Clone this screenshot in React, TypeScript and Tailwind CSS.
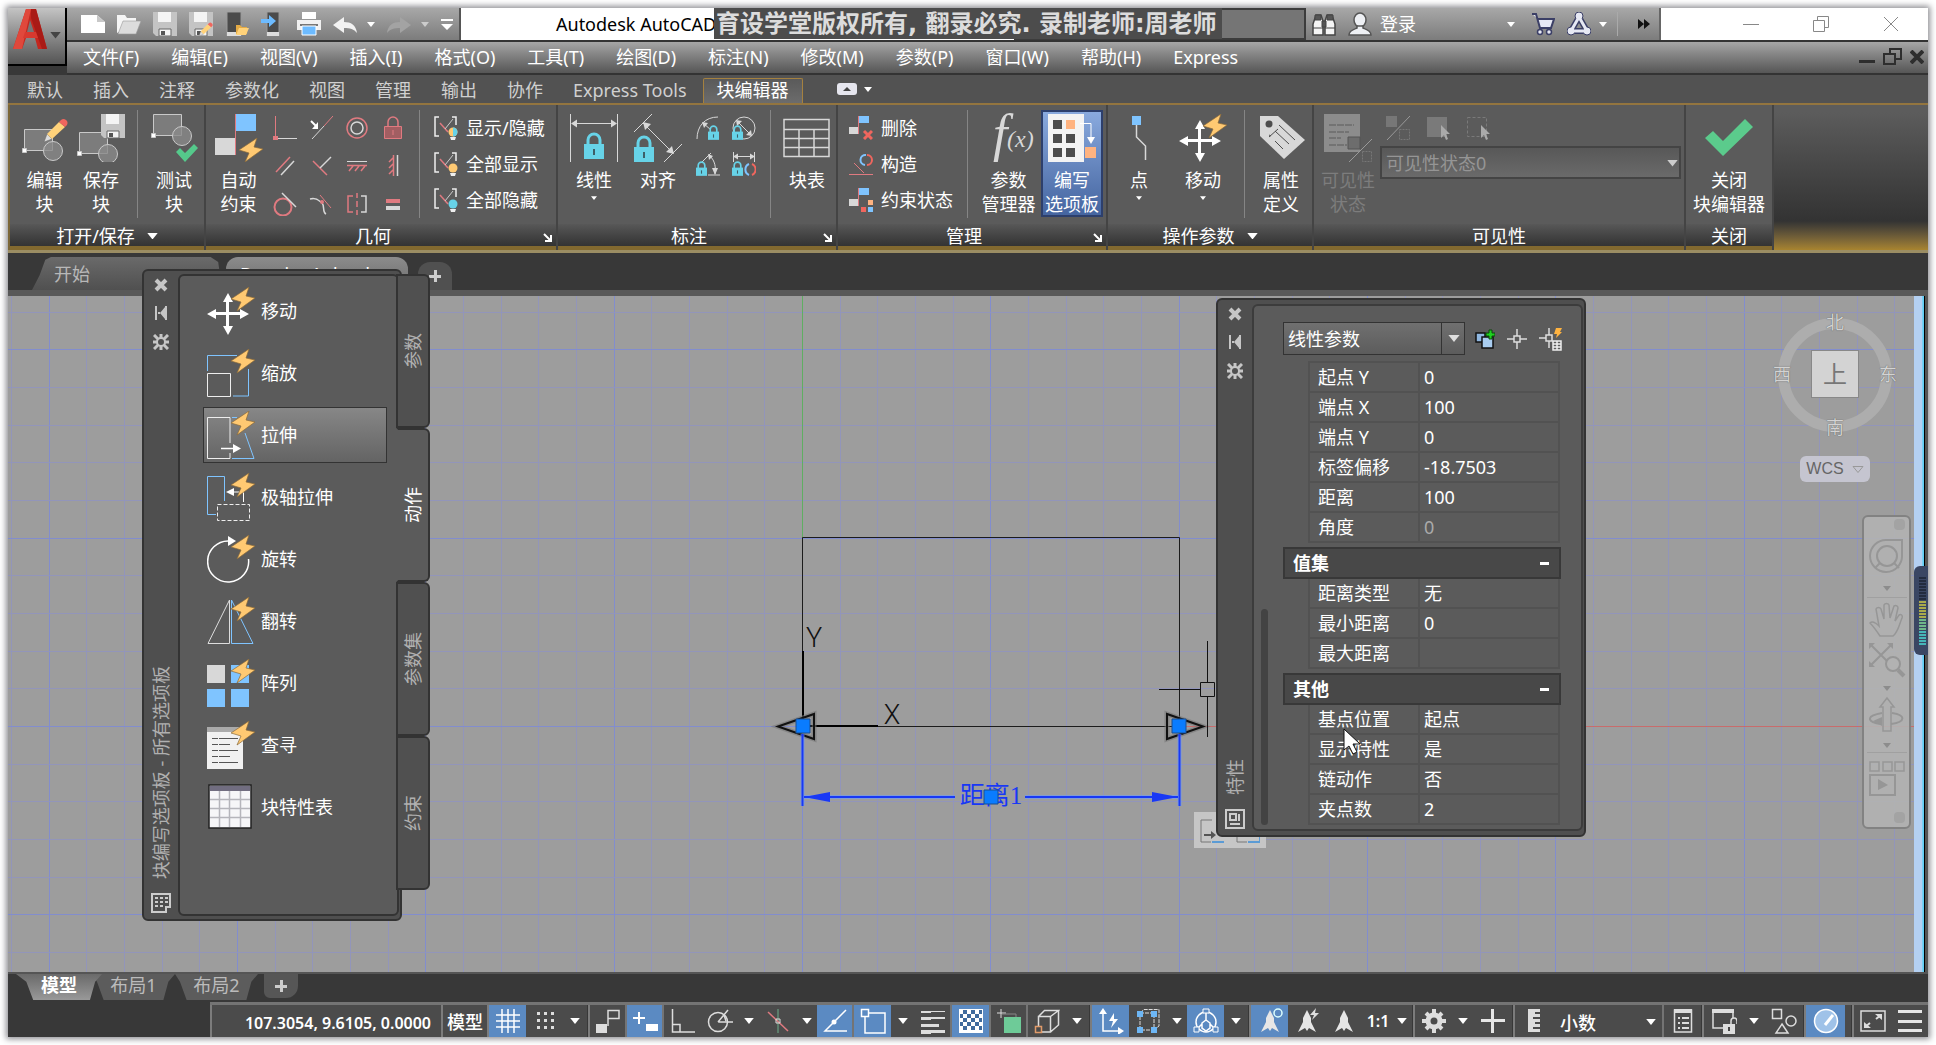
import React from 'react';
import clsx from 'clsx';

interface IconProps {
  w?: number;
  h?: number;
  className?: string;
  children?: React.ReactNode;
}

const Icon: React.FC<IconProps> = ({ w = 24, h, className, children }) => (
  <svg width={w} height={h ?? w} viewBox={`0 0 ${w} ${h ?? w}`} fill="none" className={clsx('shrink-0', className)} aria-hidden="true">
    {children}
  </svg>
);

const Caret: React.FC<{ className?: string; w?: number }> = ({ className = 'text-white', w = 8 }) => (
  <svg width={w} height={w / 2 + 1} viewBox="0 0 8 5" className={clsx('shrink-0', className)} aria-hidden="true">
    <path d="M0 0h8L4 5z" fill="currentColor" />
  </svg>
);

const BOLT = 'M18 0 0 12l10 3-4 9L24 11l-9-2z';
const GRAY = '#d8d8d8';
const RED = '#e07a80';
const BLUE = '#7fc4ff';
const CYAN = '#67d3e8';

const Bolt: React.FC<{ x: number; y: number }> = ({ x, y }) => (
  <path d={BOLT} transform={`translate(${x} ${y})`} fill="#ffc972" stroke="#8a6a3a" strokeWidth=".7" />
);

const Padlock: React.FC<{ x: number; y: number; s?: number }> = ({ x, y, s = 1 }) => (
  <g transform={`translate(${x} ${y}) scale(${s})`}>
    <path d="M4 13V8a6 6 0 0 1 12 0v5" stroke={CYAN} strokeWidth="3" />
    <path d="M0 12h20v15H0z" fill={CYAN} />
    <path d="M10 17v6" stroke="#3d5f68" strokeWidth="2" />
  </g>
);

const Floppy: React.FC<{ x?: number; y?: number }> = ({ x = 0, y = 0 }) => (
  <g transform={`translate(${x} ${y})`}>
    <path d="M0 0h24v24H3l-3-3z" fill="#c4c4c4" />
    <path d="M5 0h13v10H5z" fill="#f4f4f4" />
    <path d="M6 17h12v7H6z" fill="#f4f4f4" stroke="#666" strokeWidth="1" />
    <path d="M8 19h4v4H8z" fill="#555" />
  </g>
);

const Pencil: React.FC<{ x: number; y: number; s?: number }> = ({ x, y, s = 1 }) => (
  <g transform={`translate(${x} ${y}) scale(${s})`}>
    <path d="M0 24l3-8 5 5z" fill="#ddd" stroke="#666" strokeWidth=".5" />
    <path d="M3 16 15 4l6 5L8 21z" fill="#ffd27a" />
    <path d="M15 4l2-2a4 4 0 0 1 6 5l-2 2z" fill="#f0665e" />
  </g>
);

const Cross = ({ x, y }: { x: number; y: number }) => (
  <g transform={`translate(${x} ${y})`} fill="#fff">
    <path d="M-14-2h28v3h-28zM-2-14h3v28h-3z" />
    <path d="M-21 0l9-5V5zM21 0l-9-5V5zM0-21l-5 9H5zM0 21l-5-9H5z" />
  </g>
);

/* ---------- title bar ---------- */

const IconButton: React.FC<React.ButtonHTMLAttributes<HTMLButtonElement>> = ({ className, children, ...rest }) => (
  <button type="button" className={clsx('flex shrink-0 items-center justify-center', className)} {...rest}>
    {children}
  </button>
);

const QuickAccess = () => (
  <div className="flex w-[394px] shrink-0 items-center border-r-2 border-[#555] bg-linear-to-b from-[#a8a8a8] to-[#7c7c7c] pl-[14px]">
    <div className="flex gap-3">
      <IconButton aria-label="新建"><Icon><path d="M0 3h16l8 7v11H0z" fill="#fff" /><path d="M16 3v7h8z" fill="#c8c8c8" /></Icon></IconButton>
      <IconButton aria-label="打开"><Icon><path d="M0 21V3h8l2 3h9v4" fill="#f5f5f5" /><path d="M6 9h18l-5 13H1z" fill="#dcdcdc" stroke="#999" strokeWidth=".6" /></Icon></IconButton>
      <IconButton aria-label="保存"><Icon><Floppy /></Icon></IconButton>
      <IconButton aria-label="另存为"><Icon><Floppy /><Pencil x={10} y={10} s={0.58} /></Icon></IconButton>
      <IconButton aria-label="从移动设备打开"><Icon><path d="M2 0h14v24H2z" fill="#4b4b4b" stroke="#999" /><path d="M2 20h14v4H2z" fill="#ddd" /><path d="M11 22v-9h4l2 2h5v7z" fill="#e3aa45" /><path d="M14 16h10l-3 7H11z" fill="#ffd27a" /></Icon></IconButton>
      <IconButton aria-label="保存到移动设备"><Icon><path d="M6 0h12v24H6z" fill="#4b4b4b" stroke="#999" /><path d="M6 20h12v4H6z" fill="#ddd" /><path d="M0 7h8V3l7 6-7 6v-4H0z" fill="#6dbbff" /></Icon></IconButton>
      <IconButton aria-label="打印"><Icon><path d="M5 0h14v7H5z" fill="#fff" /><path d="M0 8h24v10H0z" fill="#f1f1f1" /><path d="M3 12h18v2H3z" fill="#777" /><path d="M5 14h14v9H5z" fill="#6dbbff" stroke="#fff" /></Icon></IconButton>
      <IconButton aria-label="放弃"><Icon><path d="M0 13 11 5v5c7 0 12 3 13 11-3-4-7-5-13-5v5z" fill="#f2f2f2" /></Icon></IconButton>
    </div>
    <IconButton aria-label="放弃列表" className="ml-[10px]"><Caret /></IconButton>
    <IconButton aria-label="重做" className="ml-3"><Icon><path d="M24 13 13 5v5C6 10 1 13 0 21c3-4 7-5 13-5v5z" fill="#a3a3a3" /></Icon></IconButton>
    <IconButton aria-label="重做列表" className="ml-[10px]"><Caret className="text-[#ccc]" /></IconButton>
    <IconButton aria-label="自定义快速访问工具栏" className="ml-3"><Icon w={12} h={12}><path d="M0 1h12v2H0zM0 6h12l-6 6z" fill="#fff" /></Icon></IconButton>
  </div>
);

const TitleBar = () => (
  <div className="flex h-[34px] border-b-2 border-[#333] bg-white">
    <QuickAccess />
    <div className="relative flex min-w-0 flex-1 items-center bg-white pl-[95px]">
      <h1 className="text-lg whitespace-nowrap text-black">Autodesk AutoCAD</h1>
      <div className="absolute top-0 left-[253px] z-10 flex h-[31px] w-[508px] items-center bg-[#4c4c4c] pl-[2px] font-['DejaVu_Sans','Noto_Sans_CJK_SC',sans-serif] text-2xl leading-none font-bold whitespace-nowrap text-[#dcdcdc]">
        育设学堂版权所有, 翻录必究. 录制老师:周老师
      </div>
    </div>
    <input aria-label="搜索" className="w-[292px] shrink-0 border-2 border-[#3c3c3c] bg-[#757575]" />
    <div className="flex w-[355px] shrink-0 items-center border-r-2 border-[#666] bg-linear-to-b from-[#a8a8a8] to-[#7c7c7c] pl-[6px]">
      <IconButton aria-label="查找">
        <Icon>
          <path d="M1 23V12L4 3h5l2 6v14zM13 23V9l2-6h5l3 9v11z" fill="#f5f5f5" stroke="#444" strokeWidth="1.5" />
          <path d="M3 3h6v5H3zM15 3h6v5h-6zM10 9h4v6h-4zM1 16h10M13 16h10" fill="#555" stroke="#444" />
        </Icon>
      </IconButton>
      <IconButton aria-label="登录" className="ml-3 gap-2 text-lg leading-6 text-white">
        <Icon>
          <ellipse cx="12" cy="8" rx="6" ry="7" fill="#eef0f4" stroke="#555" strokeWidth="1.5" />
          <path d="M1 23c0-5 6-6 8-7v-2h6v2c2 1 8 2 8 7z" fill="#eef0f4" stroke="#555" strokeWidth="1.5" />
        </Icon>
        登录
      </IconButton>
      <IconButton aria-label="登录列表" className="ml-auto"><Caret /></IconButton>
      <IconButton aria-label="应用商店" className="ml-4">
        <Icon>
          <path d="M1 2h4l4 14h11l3-9H7" fill="#e7e9f4" stroke="#3b3f66" strokeWidth="2" />
          <circle cx="9" cy="20" r="2.500" fill="#e7e9f4" stroke="#3b3f66" strokeWidth="1.500" />
          <circle cx="18" cy="20" r="2.500" fill="#e7e9f4" stroke="#3b3f66" strokeWidth="1.500" />
        </Icon>
      </IconButton>
      <IconButton aria-label="保持连接" className="ml-3 gap-2">
        <Icon>
          <path d="M12 5 4 19h16z" stroke="#3b3f66" strokeWidth="6" strokeLinejoin="round" />
          <g fill="#e7e9f4" stroke="#3b3f66"><circle cx="12" cy="4" r="4" /><circle cx="4" cy="19" r="4" /><circle cx="20" cy="19" r="4" /></g>
          <path d="M12 5 4 19h16z" stroke="#e7e9f4" strokeWidth="3" strokeLinejoin="round" />
        </Icon>
        <Caret />
      </IconButton>
      <IconButton aria-label="更多" className="mr-[2px] ml-[10px] h-6 w-10 border-l border-[#aaa] pl-3">
        <Icon w={12} h={10}><path d="M0 0l6 5-6 5zM6 0l6 5-6 5z" fill="#111" /></Icon>
      </IconButton>
    </div>
    <div className="flex w-[267px] shrink-0 justify-end bg-white pr-[2px] text-[#888]">
      <IconButton aria-label="最小化" className="w-[70px]"><Icon w={16}><path d="M0 8.500h16" stroke="currentColor" /></Icon></IconButton>
      <IconButton aria-label="还原" className="w-[70px]"><Icon w={16}><path d="M.5 4.500h11v11H.5zM4.500 4V.5h11v11H12" stroke="currentColor" /></Icon></IconButton>
      <IconButton aria-label="关闭" className="w-[70px]"><Icon w={16}><path d="M1 1l14 14M15 1 1 15" stroke="currentColor" /></Icon></IconButton>
    </div>
  </div>
);

const MENUS = ['文件(F)', '编辑(E)', '视图(V)', '插入(I)', '格式(O)', '工具(T)', '绘图(D)', '标注(N)', '修改(M)', '参数(P)', '窗口(W)', '帮助(H)', 'Express'];

const MenuBar = () => (
  <div className="flex h-[33px] items-center border-b-2 border-[#333] bg-linear-to-b from-[#a6a6a6] to-[#565656] pr-1 pb-[2px] pl-4">
    <nav className="flex gap-8 text-lg leading-6 whitespace-nowrap text-white">
      {MENUS.map((m) => <button key={m} type="button">{m}</button>)}
    </nav>
    <div className="ml-auto flex gap-2 text-[#2e2e2e]">
      <IconButton aria-label="最小化文档"><Icon w={16}><path d="M0 11h16v3H0z" fill="currentColor" /></Icon></IconButton>
      <IconButton aria-label="还原文档"><Icon w={19} h={17}><path d="M1 6h11v10H1zM7 6V1h11v10h-5" stroke="currentColor" strokeWidth="2" /></Icon></IconButton>
      <IconButton aria-label="关闭文档"><Icon w={14}><path d="M1 1l12 12M13 1 1 13" stroke="currentColor" strokeWidth="4" /></Icon></IconButton>
    </div>
  </div>
);

const Header = () => (
  <header className="relative flex">
    <button type="button" aria-label="应用程序菜单" className="z-10 -mb-[9px] flex h-[58px] w-[59px] shrink-0 items-start gap-1 self-start border-r-2 border-b-2 border-black bg-linear-to-b from-[#c4c4c4] to-[#555] pl-1">
      <Icon w={38} h={44}>
        <path d="M14 1h10l11 40h-9l-3-11H14l-4 11H1z" fill="#c3271f" />
        <path d="M14 1h5l-9 40H1z" fill="#e0483c" />
        <path d="M19 1h5l11 40h-5L19 10z" fill="#a91b16" />
        <path d="M18 12l4 12h-7z" fill="#777" />
        <path d="M13 24h11l2 6H11z" fill="#d8392f" />
      </Icon>
      <Caret w={11} className="-ml-1 mt-6 text-[#444]" />
    </button>
    <div className="min-w-0 flex-1">
      <TitleBar />
      <MenuBar />
    </div>
  </header>
);

/* ---------- ribbon ---------- */

const RIBBON_TABS = ['默认', '插入', '注释', '参数化', '视图', '管理', '输出', '协作', 'Express Tools'];

const RibbonTabs = () => (
  <div className="flex h-7 items-end bg-[#525252] pl-1">
    <div className="flex text-lg leading-[22px] whitespace-nowrap text-[#d0d0d0]">
      {RIBBON_TABS.map((t) => <button key={t} type="button" className="px-[15px] pb-[2px]">{t}</button>)}
      <button type="button" className="ml-px rounded-t-xs border border-b-0 border-[#a5813f] bg-linear-to-b from-[#5a5a5a] to-[#6c6c6c] px-[13px] pb-[2px] text-white">块编辑器</button>
    </div>
    <IconButton aria-label="最小化功能区" className="ml-[34px] h-5 gap-[7px] self-center">
      <Icon w={20} h={12}><rect width="20" height="12" rx="3" fill="#e6e6ee" /><path d="M6 8h8l-4-4z" fill="#444" /></Icon>
      <Caret />
    </IconButton>
  </div>
);

const BigButton: React.FC<{ label: string[]; caret?: boolean; active?: boolean; className?: string; children: React.ReactNode }> = ({ label, caret, active, className, children }) => (
  <button
    type="button"
    className={clsx(
      'flex h-[107px] shrink-0 flex-col items-center text-lg leading-6 whitespace-nowrap',
      active ? 'border-2 border-[#2d3f6c] bg-linear-to-b from-[#8aaade] to-[#4565a0] pt-[2px]' : 'pt-1',
      className,
    )}
  >
    {children}
    <span className="mt-[6px] flex flex-col">
      {label.map((l) => <span key={l}>{l}</span>)}
    </span>
    {caret && <Caret w={6} className="mt-1 text-white" />}
  </button>
);

const Panel: React.FC<{ title: string; caret?: boolean; launcher?: boolean; className?: string; children: React.ReactNode }> = ({ title, caret, launcher, className, children }) => (
  <section className={clsx('flex shrink-0 flex-col border-r-2 border-[#444] bg-[#5b5b5b] text-white', className)}>
    <div className="flex flex-1 pt-[5px]">{children}</div>
    <div
      className={clsx(
        'relative flex h-[26px] items-center justify-center gap-3 border-b-4 border-[#82692f] bg-linear-to-b from-[#585858] to-[#333] pt-[2px] text-lg leading-5',
        launcher && 'pr-4',
      )}
    >
      <h2>{title}</h2>
      {caret && <Caret w={11} />}
      {launcher && (
        <IconButton aria-label={`${title}设置`} className="absolute right-1 bottom-1">
          <Icon w={9}><path d="M8 2v6H2M1 1l6 6" stroke="#fff" strokeWidth="2" /></Icon>
        </IconButton>
      )}
    </div>
  </section>
);

const Divider = () => <div className="mx-2 h-[108px] w-px shrink-0 bg-[#858585]" />;

const BlockShape = ({ x, y }: { x: number; y: number }) => (
  <g transform={`translate(${x} ${y})`} stroke="#c9c9c9">
    <path d="M.5.5h28v21H.5z" fill="#7c7c7c" />
    <circle cx="29" cy="22" r="9.500" fill="#8a8a8a" fillOpacity=".8" />
    <path d="M-1.500 19.500h4v4h-4z" fill="#fff" />
  </g>
);

const CONSTRAINTS: [string, React.ReactNode][] = [
  ['重合', <><path d="M2.500 0v22" stroke={RED} /><path d="M0 20h5v4H0z" fill={RED} /><path d="M5 22.500h19" stroke={GRAY} /></>],
  ['共线', <><path d="M3 23 15 10" stroke={GRAY} /><path d="M15 10 24 0" stroke={RED} /><path d="M2 5l6 6" stroke="#fff" strokeWidth="2" /><path d="M9 6v7H3z" fill="#fff" /></>],
  ['同心', <><circle cx="12" cy="12" r="10" stroke={RED} strokeWidth="1.500" /><circle cx="12" cy="12" r="6" stroke={GRAY} strokeWidth="1.500" /></>],
  ['固定', <><path d="M7 10V6a5 5 0 0 1 10 0v4" stroke={RED} strokeWidth="1.500" /><path d="M3.500 10.500h17v12h-17z" fill="#a25e62" stroke={RED} /><path d="M12 14v5" stroke={RED} /></>],
  ['平行', <><path d="M3 18 17 3" stroke={RED} strokeWidth="1.500" /><path d="M8 21 21 7" stroke={GRAY} strokeWidth="1.500" /></>],
  ['垂直', <><path d="M4 7l14 14" stroke={RED} strokeWidth="1.500" /><path d="M11 14 22 3" stroke={GRAY} strokeWidth="1.500" /></>],
  ['水平', <><path d="M2 7.500h20" stroke={GRAY} /><path d="M2 11.500h20M4 17l4-5M10 17l4-5M16 17l4-5" stroke={RED} strokeWidth="1.500" /></>],
  ['竖直', <><path d="M16.500 1v21" stroke={GRAY} strokeWidth="1.500" /><path d="M12.500 1v21M8 8l4-4M8 14l4-4M8 20l4-4" stroke={RED} strokeWidth="1.500" /></>],
  ['相切', <><circle cx="10" cy="15" r="8.500" stroke={RED} strokeWidth="2" /><path d="M9 1l14 14" stroke={GRAY} strokeWidth="1.500" /></>],
  ['平滑', <><path d="M1 7c7-2 9 2 12 4" stroke={GRAY} strokeWidth="1.500" /><path d="M11 3l11 13" stroke={RED} /><path d="M13 11c3 3 0 9 4 11" stroke={GRAY} strokeWidth="1.500" /><circle cx="13" cy="10" r="2" fill={RED} /></>],
  ['对称', <><path d="M8 4H3v16h5M12 1v5m0 3v6m0 3v5" stroke={RED} strokeWidth="1.500" /><path d="M16 4h5v16h-5" stroke={GRAY} strokeWidth="1.500" /></>],
  ['相等', <><path d="M5 7h14v4H5z" fill={RED} /><path d="M5 14h14v4H5z" fill={GRAY} /></>],
];

const SmallRow: React.FC<{ label: string; children: React.ReactNode }> = ({ label, children }) => (
  <button type="button" className="flex h-9 items-center gap-2 whitespace-nowrap">
    <Icon>{children}</Icon>
    {label}
  </button>
);

const ConstraintBulb = ({ fill, half }: { fill: string; half?: boolean }) => (
  <>
    <path d="M5 1H1v19h4M18 1h4v8" stroke="#eee" strokeWidth="1.500" />
    <path d="M6 7l8 9" stroke={RED} strokeWidth="1.500" />
    <path d="M11 13l8-10" stroke="#ccc" />
    <circle cx="19" cy="16" r="4.500" fill={fill} />
    {half && <path d="M19 11.500a4.500 4.500 0 0 1 0 9z" fill={CYAN} />}
    <path d="M16 21h6l-1 3h-4z" fill="#eee" />
  </>
);

const FlagNodes = () => (
  <>
    <path d="M0 11h9v7H0z" fill={GRAY} />
    <path d="M10 0h10v7H10z" fill={BLUE} />
    <path d="M9.500 0v18" stroke={RED} />
  </>
);

const Ribbon = () => (
  <div className="flex h-[150px] overflow-hidden border-t-2 border-b-3 border-[#93753f] border-b-[#9b8d63] bg-linear-to-b from-[#5c5c5c] from-5% via-[#333] via-80% to-[#a8842f]">
    <Panel title="打开/保存" caret className="w-[198px] border-l-2 border-l-[#7b6637]">
      <BigButton label={['编辑', '块']} className="ml-[6px] w-[57px]">
        <Icon w={48}><BlockShape x={3} y={15} /><Pencil x={23} y={4} /></Icon>
      </BigButton>
      <BigButton label={['保存', '块']} className="w-[56px]">
        <Icon w={48}><BlockShape x={2} y={18} /><Floppy x={24} y={0} /></Icon>
      </BigButton>
      <Divider />
      <BigButton label={['测试', '块']} className="w-[56px]">
        <Icon w={48}><BlockShape x={3} y={0} /><path d="M26 38l4-4 5 5 9-9 4 4-13 14z" fill="#55c98b" /></Icon>
      </BigButton>
    </Panel>

    <Panel title="几何" launcher className="w-[352px]">
      <BigButton label={['自动', '约束']} className="ml-1 w-[57px]">
        <Icon w={48}>
          <path d="M0 24h20v17H0z" fill={GRAY} /><path d="M21 0h20v17H21z" fill={BLUE} />
          <path d="M20.500 0v41" stroke={RED} /><Bolt x={24} y={24} />
        </Icon>
      </BigButton>
      <div className="grid grid-cols-4 grid-rows-3">
        {CONSTRAINTS.map(([name, art]) => (
          <IconButton key={name} aria-label={name} className="h-9 w-9"><Icon>{art}</Icon></IconButton>
        ))}
      </div>
      <Divider />
      <div className="ml-[6px] flex flex-col text-lg leading-6">
        <SmallRow label="显示/隐藏"><ConstraintBulb fill="#ffc972" half /></SmallRow>
        <SmallRow label="全部显示"><ConstraintBulb fill="#ffc972" /></SmallRow>
        <SmallRow label="全部隐藏"><ConstraintBulb fill={CYAN} /></SmallRow>
      </div>
    </Panel>

    <Panel title="标注" launcher className="w-[280px]">
      <BigButton label={['线性']} caret className="ml-1 w-[64px]">
        <Icon w={48}>
          <path d="M.5 0v48M47.500 0v48M2 9.500h44" stroke={GRAY} /><path d="M1 9.500l6-4v8zM47 9.500l-6-4v8z" fill={GRAY} />
          <Padlock x={14} y={18} />
        </Icon>
      </BigButton>
      <BigButton label={['对齐']} className="w-[64px]">
        <Icon w={48}>
          <path d="M0 18 18 0M30 48l18-18M9 9l30 30" stroke={GRAY} /><path d="M9 8l8 2-6 6zM40 40l-8-2 6-6z" fill={GRAY} />
          <Padlock x={0} y={21} />
        </Icon>
      </BigButton>
      <div className="grid grid-cols-2 content-start">
        <IconButton aria-label="半径" className="h-9 w-9"><Icon><path d="M1 23C1 10 9 1 22 1M7 7l8 7" stroke={GRAY} /><path d="M6 6l6 1-4 5z" fill={GRAY} /><Padlock x={12} y={9} s={0.55} /></Icon></IconButton>
        <IconButton aria-label="直径" className="h-9 w-9"><Icon><circle cx="12" cy="12" r="11" stroke={GRAY} /><path d="M4 4l16 16" stroke={GRAY} /><path d="M4 4l6 1-5 5zM20 20l-6-1 5-5z" fill={GRAY} /><Padlock x={0} y={9} s={0.55} /></Icon></IconButton>
        <IconButton aria-label="角度" className="h-9 w-9"><Icon><path d="M6 10 15 1M12 23h12M14 4c5 5 6 11 5 18" stroke={GRAY} /><path d="M12 2l5 2-4 4zM16 16h6l-3 7z" fill={GRAY} /><Padlock x={0} y={9} s={0.55} /></Icon></IconButton>
        <IconButton aria-label="转换" className="h-9 w-9"><Icon><path d="M1.500 0v10M22.500 0v10M3 4.500h18" stroke={GRAY} /><path d="M1 4.500l5-3v6zM23 4.500l-5-3v6z" fill={GRAY} /><Padlock x={0} y={9} s={0.55} /><path d="M17 23a6 6 0 0 1 0-11" stroke={BLUE} strokeWidth="2" /><path d="M20 12a6 6 0 0 1 0 11" stroke="#f0665e" strokeWidth="2" /></Icon></IconButton>
      </div>
      <Divider />
      <BigButton label={['块表']} className="w-[56px]">
        <Icon w={48}><path d="M1 5.500h45v37H1zM1 15.500h45M1 24.500h45M1 33.500h45M16 15.500v27M31 15.500v27" stroke={GRAY} strokeWidth="1.500" /></Icon>
      </BigButton>
    </Panel>

    <Panel title="管理" launcher className="w-[270px]">
      <div className="ml-[11px] flex w-[110px] flex-col text-lg leading-6">
        <SmallRow label="删除"><FlagNodes /><path d="M15 15l8 8M23 15l-8 8" stroke="#f0665e" strokeWidth="3" /></SmallRow>
        <SmallRow label="构造"><path d="M0 22.500h24M5 11l10 10" stroke={RED} /><path d="M16 13a5 5 0 0 1 1-10" stroke={BLUE} strokeWidth="2" /><path d="M18 3a5 5 0 0 1 0 10" stroke="#f0665e" strokeWidth="2" /></SmallRow>
        <SmallRow label="约束状态"><FlagNodes /><path d="M19 12h5v5h-5z" fill="#ffb380" /><path d="M12 19h5v5h-5z" fill="#f0665e" /><path d="M19 19h5v5h-5z" fill={BLUE} /></SmallRow>
      </div>
      <Divider />
      <BigButton label={['参数', '管理器']} className="w-[65px]">
        <Icon w={48} className="overflow-visible">
          <text x="8" y="37" fontFamily="'Liberation Serif', serif" fontStyle="italic" fontSize="52" fill={GRAY}>f</text>
          <text x="22" y="33" fontFamily="'Liberation Serif', serif" fontStyle="italic" fontSize="24" fill={GRAY}>(x)</text>
        </Icon>
      </BigButton>
      <BigButton label={['编写', '选项板']} active className="w-[62px]">
        <Icon w={48}>
          <path d="M0 0h36v48H0z" fill="#f3f3f3" />
          <path d="M5 6h9v9H5zM5 20h9v9H5zM5 34h9v9H5zM18 20h9v9h-9zM18 34h9v9h-9z" fill="#4d4d4d" />
          <path d="M18 6h9v9h-9zM37 33h11v11H37z" fill="#ffb380" />
          <path d="M32 9.500h11V24" stroke="#fff" /><path d="M39 23h8l-4 7z" fill="#fff" />
        </Icon>
      </BigButton>
    </Panel>

    <Panel title="操作参数" caret className="w-[206px]">
      <BigButton label={['点']} caret className="ml-1 w-[54px]">
        <Icon w={48}><path d="M17 2h9v9h-9z" fill={BLUE} /><path d="M21.500 11v12l9 9v14" stroke={GRAY} strokeWidth="1.500" /></Icon>
      </BigButton>
      <BigButton label={['移动']} caret className="ml-1 w-[66px]">
        <Icon w={48}><Cross x={21} y={27} /><Bolt x={24} y={0} /></Icon>
      </BigButton>
      <Divider />
      <BigButton label={['属性', '定义']} className="w-[56px]">
        <Icon w={48}>
          <path d="M3 2h18l27 24-21 19L3 22z" fill={GRAY} /><circle cx="12" cy="10" r="3.500" fill="#4d4d4d" />
          <path d="M22 11l16 15M18 17l14 13M12 21l2 1M18 27l8 8M12 23l9-8" stroke="#4d4d4d" />
        </Icon>
      </BigButton>
    </Panel>

    <Panel title="可见性" className="w-[372px]">
      <BigButton label={['可见性', '状态']} className="ml-1 w-[60px] text-[#7d7d7d]">
        <Icon w={48}>
          <path d="M0 0h36v38H0z" fill="#8c8c8c" /><path d="M5 11h25M5 18h20M5 24h12M5 31h18" stroke="#5b5b5b" strokeDasharray="7 1" />
          <path d="M24 23h12v12H24z" fill="#6d6d6d" stroke="#555" /><path d="M25 48 48 25" stroke="#999" /><path d="M38.500 37.500h9v10h-9z" stroke="#777" strokeDasharray="2 1" />
        </Icon>
      </BigButton>
      <div className="flex min-w-0 flex-1 flex-col pr-[3px] pl-[2px]">
        <div className="flex h-9 items-center gap-4 pl-[6px]">
          <IconButton aria-label="可见性模式"><Icon><path d="M0 0h11v11H0z" fill="#777" /><path d="M1 24 24 0" stroke="#999" /><path d="M13.500 13.500h10v10h-10z" stroke="#777" strokeDasharray="2 1" /></Icon></IconButton>
          <IconButton aria-label="使可见"><Icon><path d="M1 1h20v20H1z" fill="#7a7a7a" /><path d="M15 9v13l3-3 2 5 2-1-2-5h4z" fill="#aaa" /></Icon></IconButton>
          <IconButton aria-label="使不可见"><Icon><path d="M1.500 1.500h19v19h-19z" stroke="#7a7a7a" strokeDasharray="3 2" /><path d="M15 9v13l3-3 2 5 2-1-2-5h4z" fill="#aaa" /></Icon></IconButton>
        </div>
        <div className="relative">
          <select aria-label="可见性状态" disabled className="h-[33px] w-full appearance-none border-2 border-[#444] bg-linear-to-b from-[#585858] to-[#6a6a6a] pl-1 text-lg leading-6 text-[#959595]">
            <option>可见性状态0</option>
          </select>
          <Caret w={11} className="absolute top-[14px] right-[3px] text-[#ccc]" />
        </div>
      </div>
    </Panel>

    <Panel title="关闭" className="w-[88px]">
      <BigButton label={['关闭', '块编辑器']} className="w-full">
        <Icon w={48}><path d="M0 24l8-7 10 10L40 5l8 8-30 29z" fill="#5bcb8c" /></Icon>
      </BigButton>
    </Panel>
  </div>
);

/* ---------- document tabs ---------- */

const DocTabs = () => (
  <div className="flex h-[43px] items-end border-b-6 border-[#595959] bg-[#383838] pl-6 text-lg leading-6">
    <button type="button" className="h-[33px] w-[190px] bg-linear-to-b from-[#6a6a6a] to-[#505050] pl-[22px] text-left text-[#b8b8b8] [clip-path:polygon(0_100%,4%_55%,7%_8%,10%_0,94%_0,98%_15%,100%_100%)]">开始</button>
    <button type="button" className="ml-1 h-[33px] w-[182px] rounded-t-xl bg-linear-to-b from-[#8c8c8c] to-[#6c6c6c] pt-px pl-[14px] text-left text-white">Drawing1.dwg*</button>
    <IconButton aria-label="新图形" className="ml-[10px] h-7 w-[34px] rounded-t-xl bg-[#505050]">
      <Icon w={12}><path d="M5 0h3v5h4v3H8v4H5V8H0V5h5z" fill="#ccc" /></Icon>
    </IconButton>
  </div>
);

/* ---------- drawing area ---------- */

// grid spacing and origin of the drawing, in canvas pixels
const STEP = 113 / 3;
const ORIGIN = { x: 794, y: 430 };

const gridRange = (from: number, to: number) => Array.from({ length: to - from + 1 }, (_, i) => i + from);

const gridColor = (n: number) => (n % 5 === 0 ? '#828dce' : '#9295ba');

const Drawing = () => (
  <svg className="absolute inset-0 h-full w-full" fill="none" aria-label="块几何图形">
    {gridRange(-21, 29).map((n) => {
      const x = Math.round(ORIGIN.x + n * STEP) + 0.5;
      return <path key={n} d={`M${x} 0V1200`} stroke={gridColor(n)} />;
    })}
    {gridRange(-11, 20).map((n) => {
      const y = Math.round(ORIGIN.y + n * STEP) + 0.5;
      return <path key={n} d={`M0 ${y}H2400`} stroke={gridColor(n)} />;
    })}
    <g transform={`translate(${ORIGIN.x} ${ORIGIN.y})`}>
      <path d="M.5-431V0" stroke="#5fae62" />
      <path d="M0 .5H1600" stroke="#c86c6c" />
      <path d="M.5-188.500h377V.5H.5z" stroke="#1c1c1c" />
      <path d="M1-75V0h75" stroke="#000" strokeWidth="2" />
      <g fontFamily="Roboto, sans-serif" fontWeight="300" fontSize="27" fill="#111" textAnchor="middle">
        <text x="12" y="-79">Y</text>
        <text x="90" y="-2">X</text>
      </g>
      <path d="M-24 .5 12-12v25zM401 .5 365-12v25z" stroke="#777" strokeWidth="5" opacity=".6" />
      <path d="M-24 .5 12-12v25zM401 .5 365-12v25z" stroke="#111" strokeWidth="2" />
      <g stroke="#6a9aff" strokeWidth="4" opacity=".6">
        <path d="M.5 8v72M377.500 8v72M2 71h151M223 71h153" />
      </g>
      <g stroke="#1838f5" strokeWidth="2">
        <path d="M.5 8v72M377.500 8v72M2 71h151M223 71h153" />
      </g>
      <path d="M2 71l26-5v10zM376 71l-26-5v10z" fill="#1838f5" />
      <text x="189" y="78" textAnchor="middle" fontFamily="'Liberation Serif', 'Noto Sans CJK SC', serif" fontSize="25" fill="#1838f5">距离1</text>
      <g fill="#0a7cff" stroke="#1b4f90">
        <path d="M-6-7H8V7H-6zM370-7h14V7h-14zM182 64h14v14h-14z" />
      </g>
      <path d="M357-36.500h41M405.500-85v41M405.500-30v41M398.500-43.500h14v14h-14z" stroke="#111" />
    </g>
  </svg>
);

const ViewCube = () => (
  <div className="absolute top-[14px] right-[29px] flex w-[128px] flex-col items-center text-lg leading-6 text-[#d3d3d3]">
    <div className="relative grid h-[128px] w-[124px] place-items-center [text-shadow:0_0_1px_#444]">
      <div className="absolute top-[8px] h-[114px] w-[114px] rounded-full border-[11px] border-[#adadad]" />
      <span className="absolute top-0">北</span>
      <span className="absolute left-0">西</span>
      <span className="absolute right-0">东</span>
      <span className="absolute bottom-[-1px]">南</span>
      <button type="button" className="relative h-12 w-12 border border-[#888] bg-[#d3d3d3] text-2xl text-[#777] [text-shadow:none]">上</button>
    </div>
    <button type="button" className="mt-[18px] flex h-[26px] w-[70px] items-center justify-center gap-2 rounded-md bg-[#c5c5d0] font-['Liberation_Sans'] text-base text-[#666]">
      WCS
      <Icon w={12} h={7}><path d="M1 .5h10l-5 6z" stroke="#999" /></Icon>
    </button>
  </div>
);

const NavBar = () => (
  <div className="absolute top-[219px] right-[17px] flex h-[314px] w-[49px] flex-col items-center rounded-md border-2 border-[#828282] bg-[#b2b2b2]/90 text-[#969696]">
    <button type="button" aria-label="关闭导航栏" className="mt-[2px] mr-1 h-[11px] w-[11px] self-end rounded-sm bg-[#a3a3a3]" />
    <IconButton aria-label="导航控制盘" className="mt-2">
      <Icon w={36}><path d="M18 2h15v15A16 16 0 1 1 18 2z" stroke="currentColor" strokeWidth="2" /><circle cx="18" cy="18" r="10" stroke="currentColor" strokeWidth="2" /><path d="M11 25l-5 5M25 25l5 5" stroke="currentColor" strokeWidth="2" /></Icon>
    </IconButton>
    <Caret className="mt-3 text-[#8c8c8c]" />
    <div className="mt-[6px] h-px w-10 bg-[#a0a0a0]" />
    <IconButton aria-label="平移" className="mt-1">
      <Icon w={36}><path d="M11 34C7 28 4 24 1 21c2-2 5-1 9 3L7 7c1-2 4-2 5 0l3 10V3c1-2 4-2 5 0l1 13 4-12c2-1 4 0 4 2l-3 13 4-6c2-1 4 0 3 3-3 7-4 14-9 18z" stroke="currentColor" strokeWidth="1.500" /></Icon>
    </IconButton>
    <IconButton aria-label="范围缩放" className="mt-1">
      <Icon w={38} h={36}><path d="M2 2l22 22M24 2 2 24" stroke="currentColor" strokeWidth="2" /><path d="M1 1h6L1 7zM25 1h-6l6 6zM1 25h6l-6-6z" fill="currentColor" /><circle cx="25" cy="22" r="7" fill="#b2b2b2" stroke="currentColor" strokeWidth="2" /><path d="M30 28l6 6" stroke="currentColor" strokeWidth="4" /></Icon>
    </IconButton>
    <Caret className="mt-2 text-[#8c8c8c]" />
    <IconButton aria-label="动态观察" className="mt-1">
      <Icon w={36} h={40}><path d="M14 36V12h-3l7-9 7 9h-3v24z" stroke="currentColor" strokeWidth="1.500" /><path d="M13 18C-4 21-2 27 12 29M23 18c14 2 14 9-1 11" stroke="currentColor" strokeWidth="2" /><path d="M4 26l9-4v9z" fill="currentColor" /></Icon>
    </IconButton>
    <Caret className="mt-2 text-[#8c8c8c]" />
    <div className="mt-1 h-px w-10 bg-[#a0a0a0]" />
    <IconButton aria-label="ShowMotion" className="mt-2">
      <Icon w={36} h={36}><path d="M1 1h9v9H1zM14 1h9v9h-9zM26 1h9v9h-9z" stroke="currentColor" strokeWidth="1.500" /><path d="M1 14h25v20H1z" stroke="currentColor" strokeWidth="2" /><path d="M9 18v11l10-5z" fill="currentColor" /></Icon>
    </IconButton>
    <button type="button" aria-label="导航栏选项" className="mt-auto mr-1 mb-1 h-[11px] w-[11px] self-end rounded-sm bg-[#a3a3a3]" />
  </div>
);

const EdgeRecorder = () => (
  <div className="absolute inset-y-0 right-0 flex w-[14px] border-r-3 border-[#555] bg-linear-to-r from-[#b4d0f2] from-70% to-[#5fd0f5] to-80%">
    <div className="ml-auto w-px bg-black" />
    <div className="absolute top-[270px] left-0 flex h-[89px] w-[14px] flex-col items-end justify-center gap-px rounded-l-md bg-[#3a4663] pr-[2px]">
      <Icon w={7} h={68}>
        {gridRange(0, 22).map((n) => (
          <path key={n} d={`M0 ${n * 3}h7v2H0z`} fill={n < 8 ? '#232b3e' : n < 14 ? '#a9a94c' : n < 18 ? '#6fb58a' : '#45b5b8'} />
        ))}
      </Icon>
    </div>
  </div>
);

/* ---------- floating palettes ---------- */

const ACTIONS: { name: string; art: React.ReactNode }[] = [
  { name: '移动', art: <Cross x={21} y={27} /> },
  { name: '缩放', art: <><path d="M.5 22V6.500H30M41.500 20v27H26" stroke={BLUE} /><path d="M.5 24.500h23v23H.5z" stroke="#eee" /></> },
  { name: '拉伸', art: <><path d="M25 6.500h5M38 22l9 25.500H25" stroke={BLUE} /><path d="M23 32V6.500H.5v41H23V42" stroke="#eee" /><path d="M14 37.500h13" stroke="#fff" strokeWidth="1.500" /><path d="M26 33l8 4.500-8 4.500z" fill="#fff" /></> },
  { name: '极轴拉伸', art: <><path d="M17.500 28V3.500H.5v38H9" stroke={BLUE} /><path d="M10.500 31.500h32v16h-32z" stroke="#eee" strokeDasharray="4 2" /><path d="M36.500 29V19H24" stroke="#fff" /><path d="M19 19l8-4v8z" fill="#fff" /></> },
  { name: '旋转', art: <><path d="M22 6A20.500 20.500 0 1 0 41.500 24" stroke="#fff" strokeWidth="1.500" /><path d="M21 1l8 5-8 5z" fill="#fff" /></> },
  { name: '翻转', art: <><path d="M22.500 3v43.500H1z" stroke="#ddd" /><path d="M24.500 3v43.500H46z" stroke={BLUE} /></> },
  { name: '阵列', art: <><path d="M0 6h18v18H0z" fill={GRAY} /><path d="M24 6h18v18H24zM0 30h18v18H0zM24 30h18v18H24z" fill={BLUE} /></> },
  { name: '查寻', art: <><path d="M0 6h36v42H0z" fill="#f1f1f1" /><path d="M0 6h36v5H0z" fill="#aaa" /><path d="M5 17.500h26M5 23.500h18M5 29.500h26M5 35.500h18M5 41.500h26" stroke="#555" strokeDasharray="6 1 40 0" /></> },
  { name: '块特性表', art: <><path d="M2 2h42v43H2z" fill="#f6f6f8" stroke="#222" strokeWidth="1.500" /><path d="M3 3h40v5H3z" fill="#716d80" /><path d="M3 16.500h40M3 25.500h40M3 34.500h40M12.500 8v36M22.500 8v36M33.500 8v36" stroke="#b5b5bb" strokeWidth="1.500" /></> },
];

const PaletteBar: React.FC<{ title: string; children: React.ReactNode }> = ({ title, children }) => (
  <div className="flex w-[34px] shrink-0 flex-col items-center gap-[14px] pt-[7px] pb-[6px] text-[#c6c6c6]">
    <IconButton aria-label={`关闭${title}`}><Icon w={14}><path d="M2 2l10 10M12 2 2 12" stroke="currentColor" strokeWidth="4" /></Icon></IconButton>
    <IconButton aria-label="自动隐藏"><Icon w={14}><path d="M1 0h2v14H1zM11 0h2v14h-2zM4 6h2v2H4zM11 1v12L6 7z" fill="currentColor" /></Icon></IconButton>
    <IconButton aria-label="特性菜单"><Icon w={16}><circle cx="8" cy="8" r="4" stroke="currentColor" strokeWidth="2" /><path d="M8 0v4M8 12v4M0 8h4M12 8h4M1 1l4 4M11 11l4 4M15 1l-4 4M5 11l-4 4" stroke="currentColor" strokeWidth="3" /></Icon></IconButton>
    <h2 className="mt-auto rotate-180 text-lg leading-6 whitespace-nowrap text-[#b0b0b0] [text-orientation:sideways] [writing-mode:vertical-rl]">{title}</h2>
    {children}
  </div>
);

const AUTHORING_TABS = ['参数', '动作', '参数集', '约束'];

const AuthoringPalette = () => (
  <aside className="absolute top-4 left-[134px] flex">
    <div className="flex h-[652px] w-[260px] rounded-md border-2 border-[#333] bg-[#4f4f4f]">
      <PaletteBar title="块编写选项板 - 所有选项板">
        <Icon w={20}><path d="M1 1h18v13h-4v5H1z" stroke="#ccc" strokeWidth="2" /><path d="M4 5h3M9 5h3M4 9h3M9 9h3M4 13h3M9 13h3M14 5h3M14 9h3" stroke="#ccc" strokeWidth="2" /></Icon>
      </PaletteBar>
      <ul className="my-[3px] mr-px flex min-w-0 flex-1 flex-col gap-[6px] rounded-md border-2 border-[#333] bg-[#5b5b5b] pt-[7px] pl-[23px] text-lg leading-6 text-white">
        {ACTIONS.map(({ name, art }) => (
          <li key={name}>
            <button
              type="button"
              className={clsx(
                'flex h-14 w-[184px] items-center gap-[6px] border pl-[3px] whitespace-nowrap',
                name === '拉伸' ? 'border-[#333] bg-linear-to-b from-[#878787] to-[#646464]' : 'border-transparent',
              )}
            >
              <Icon w={48}>
                {art}
                {name !== '块特性表' && <Bolt x={24} y={0} />}
              </Icon>
              {name}
            </button>
          </li>
        ))}
      </ul>
    </div>
    <div role="tablist" className="mt-[5px] -ml-[6px] flex w-[34px] flex-col text-lg leading-6">
      {AUTHORING_TABS.map((t) => (
        <button
          key={t}
          type="button"
          role="tab"
          aria-selected={t === '动作'}
          className={clsx(
            'flex h-[154px] items-center justify-center rounded-r-md border-2 border-[#333]',
            t === '动作' ? 'border-l-[#5b5b5b] bg-[#5b5b5b] text-white' : 'bg-[#505050] text-[#b0b0b0]',
          )}
        >
          <span className="rotate-180 [text-orientation:sideways] [writing-mode:vertical-rl]">{t}</span>
        </button>
      ))}
    </div>
  </aside>
);

type Row = [string, string];

const GEOMETRY: Row[] = [['起点 Y', '0'], ['端点 X', '100'], ['端点 Y', '0'], ['标签偏移', '-18.7503'], ['距离', '100'], ['角度', '0']];
const VALUE_SET: Row[] = [['距离类型', '无'], ['最小距离', '0'], ['最大距离', '']];
const MISC: Row[] = [['基点位置', '起点'], ['显示特性', '是'], ['链动作', '否'], ['夹点数', '2']];

const PropTable: React.FC<{ rows: Row[]; className?: string }> = ({ rows, className }) => (
  <table className={clsx('ml-[25px] w-[252px] border-collapse', className)}>
    <tbody>
      {rows.map(([label, value]) => (
        <tr key={label} className="h-[30px]">
          <th scope="row" className="w-[110px] border-2 border-[#525252] py-0 pl-2 text-left font-normal whitespace-nowrap">{label}</th>
          <td className={clsx('border-2 border-[#525252] py-0 pl-1', label === '角度' && 'text-[#aaa]')}>{value}</td>
        </tr>
      ))}
    </tbody>
  </table>
);

const SectionHead: React.FC<{ title: string }> = ({ title }) => (
  <button type="button" className="relative mt-1 flex h-8 w-[278px] items-center justify-between border-2 border-[#383838] bg-[#484848] pr-[10px] pl-2 font-bold">
    {title}
    <Icon w={9} h={3}><path d="M0 0h9v3H0z" fill="#fff" /></Icon>
  </button>
);

const PropertiesPalette = () => (
  <aside className="absolute top-[45px] left-[1208px] flex h-[539px] w-[370px] rounded-md border-2 border-[#333] bg-[#4f4f4f]">
    <PaletteBar title="特性">
      <Icon w={20}><path d="M1 1h18v18H1z" stroke="#ccc" strokeWidth="2" /><path d="M5 5h6v6H5zM14 5v7M5 15h10" stroke="#ccc" strokeWidth="2" /></Icon>
    </PaletteBar>
    <div className="my-1 mr-px flex flex-1 rounded-md border-2 border-[#3c3c3c] bg-[#5b5b5b] text-lg leading-6 text-white">
      <div className="mt-auto mb-1 ml-[7px] h-[216px] w-[7px] rounded-full bg-[#434343]" />
      <div className="ml-[15px] pt-4">
        <div className="flex items-center">
          <div className="relative">
            <select aria-label="对象类型" className="h-[33px] w-[182px] appearance-none border border-[#333] bg-linear-to-b from-[#707070] to-[#5c5c5c] pl-1 text-lg leading-6">
              <option>线性参数</option>
            </select>
            <span className="pointer-events-none absolute top-0 right-0 flex h-[33px] w-6 items-center justify-center border-l border-[#333]"><Caret w={12} className="text-[#ddd]" /></span>
          </div>
          <IconButton aria-label="切换 PICKADD" className="ml-[10px]"><Icon w={20}><path d="M1 4h9v9H1z" fill="#8fb7e0" stroke="#111" strokeWidth="1.500" /><path d="M7 8h11v11H7z" fill="#a9cdf0" stroke="#111" strokeWidth="1.500" /><path d="M11 4h3V1h3v3h3v3h-3v3h-3V7h-3z" fill="#1fd01f" stroke="#0a4a0a" /></Icon></IconButton>
          <IconButton aria-label="选择对象" className="ml-3"><Icon w={20}><path d="M10 0v7M10 13v7M0 10h7M13 10h7M7 7h6v6H7z" stroke="#ddd" strokeWidth="1.500" /></Icon></IconButton>
          <IconButton aria-label="快速选择" className="ml-3"><Icon w={24}><path d="M10 1v7M10 14v7M0 11h7M7 8h6v6H7z" stroke="#ddd" strokeWidth="1.500" /><path d="M17 1h6l-2 4h2l-6 6 1-4h-3z" fill="#ffb340" /><path d="M14 14h8v9h-8zM14 17h8M14 20h8M18 14v9" stroke="#eee" strokeWidth="1.500" /></Icon></IconButton>
        </div>
        <PropTable rows={GEOMETRY} className="mt-[6px]" />
        <SectionHead title="值集" />
        <PropTable rows={VALUE_SET} className="-mt-[2px]" />
        <SectionHead title="其他" />
        <PropTable rows={MISC} className="-mt-[2px]" />
      </div>
    </div>
    <Icon w={18} h={28} className="absolute top-[428px] left-[125px]">
      <path d="M1 1v21l5-4 4 8 4-2-4-8h7z" fill="#fff" stroke="#111" />
    </Icon>
  </aside>
);

const ParameterHint = () => (
  <div className="absolute top-[559px] left-[1186px] flex h-9 w-[72px] gap-3 bg-[#c6c6c6] pt-[7px] pl-[6px]">
    <Icon><path d="M12 1H1v22h10" stroke="#777" /><path d="M4 16h9" stroke="#555" strokeWidth="2" /><path d="M11 12l5 4-5 4z" fill="#555" /><path d="M12 23h12" stroke="#5b9bd5" strokeWidth="2" /></Icon>
    <Icon><path d="M12 1H1v22h10" stroke="#777" /><path d="M12 23h12V10" stroke="#5b9bd5" strokeWidth="2" /></Icon>
  </div>
);

/* ---------- layout tabs and status bar ---------- */

const LayoutTabs = () => (
  <div className="flex h-[30px] items-start border-t-2 border-[#555] bg-[#383838] pl-2 text-lg leading-5">
    <button type="button" className="z-10 h-[26px] w-[86px] bg-linear-to-b from-[#6a6a6a] to-[#999] pb-1 font-bold text-white [clip-path:polygon(0_0,100%_0,92%_30%,86%_100%,20%_100%,12%_30%)]">模型</button>
    <button type="button" className="-ml-[10px] h-[26px] w-[83px] bg-[#5c5c5c] pb-1 text-[#bbb] [clip-path:polygon(0_0,100%_0,92%_30%,86%_100%,14%_100%,6%_30%)]">布局1</button>
    <button type="button" className="h-[26px] w-[83px] bg-[#5c5c5c] pb-1 text-[#bbb] [clip-path:polygon(0_0,100%_0,92%_30%,86%_100%,14%_100%,6%_30%)]">布局2</button>
    <IconButton aria-label="新建布局" className="ml-[6px] h-6 w-[34px] rounded-br-xl rounded-bl-md bg-[#565656]">
      <Icon w={12}><path d="M5 0h3v5h4v3H8v4H5V8H0V5h5z" fill="#ccc" /></Icon>
    </IconButton>
  </div>
);

const Tool: React.FC<{ name: string; on?: boolean; sep?: boolean; wide?: boolean; children: React.ReactNode }> = ({ name, on, sep, wide, children }) => (
  <IconButton aria-label={name} aria-pressed={on} className={clsx(wide ? 'w-[39px]' : 'w-[37px]', sep && 'border-r-2 border-[#747474]', on && 'bg-[#5b8ac2] bg-clip-padding')}>
    <Icon w={26}>{children}</Icon>
  </IconButton>
);

const Drop: React.FC<{ name: string; wide?: boolean }> = ({ name, wide }) => (
  <IconButton aria-label={`${name}选项`} className={wide ? 'w-6' : 'w-[21px]'}><Caret w={10} /></IconButton>
);

const Group: React.FC<{ className?: string; children: React.ReactNode }> = ({ className, children }) => (
  <div className={clsx('flex shrink-0 border-l-2 border-[#7c7c7c] bg-[#4b4b4b]', className)}>{children}</div>
);

const Scale = () => <path d="M13 2l4 8v4l5 10-7-4-2 3-2-3-7 4 5-10v-4z" fill="#e6e6e6" />;

const StatusBar = () => (
  <footer className="flex h-[35px] bg-[#383838] text-white">
    <div className="flex-1" />
    <div className="flex shrink-0 gap-px border-t-3 border-[#747474]">
      <Group>
        <output className="flex w-[231px] items-center justify-end border-r-2 border-[#7c7c7c] pt-1 pr-[10px] text-base font-semibold whitespace-nowrap">107.3054, 9.6105, 0.0000</output>
        <button type="button" className="w-[46px] border-r-2 border-[#7c7c7c] pt-[2px] text-lg leading-6 font-medium">模型</button>
        <Tool name="栅格" on><path d="M7 1v24M13 1v24M19 1v24M1 7h24M1 13h24M1 19h24" stroke="#fff" strokeWidth="1.500" /></Tool>
        <Tool name="捕捉模式"><path d="M5 4h3v3H5zM12 4h3v3h-3zM19 4h3v3h-3zM5 11h3v3H5zM12 11h3v3h-3zM19 11h3v3h-3zM5 18h3v3H5zM12 18h3v3h-3zM19 18h3v3h-3z" fill="#ddd" /></Tool>
        <Drop name="捕捉" wide />
      </Group>
      <Group>
        <Tool name="推断约束" sep><path d="M13 2.500h11v8H13zM13 10v8" stroke="#ddd" strokeWidth="1.500" /><path d="M1 16h11v9H1z" fill="#ddd" /></Tool>
        <Tool name="动态输入" on sep><path d="M7 4v12M1 10h12" stroke="#fff" strokeWidth="2" /><path d="M14 16h12v7H14z" fill="#fff" /></Tool>
        <Tool name="正交模式"><path d="M2.500 1v23H25M2 16.500h8V24" stroke="#ddd" strokeWidth="1.500" /></Tool>
        <Tool name="极轴追踪"><circle cx="11" cy="14" r="9.500" stroke="#ddd" strokeWidth="1.500" /><path d="M11 14 21 2M11 14h15M17 7l2 6" stroke="#ddd" strokeWidth="1.500" /></Tool>
        <Drop name="极轴" />
        <Tool name="等轴测草图"><path d="M13 1v24" stroke="#6fb08c" /><path d="M3 4l20 19" stroke="#e07a80" strokeWidth="1.500" /><path d="M11 11h4v4h-4z" stroke="#ddd" /></Tool>
        <Drop name="等轴测" />
        <Tool name="对象捕捉追踪" on sep><path d="M24 2 3 23h22" stroke="#fff" strokeWidth="1.500" /><circle cx="12" cy="14" r="2.500" fill="#fff" /></Tool>
        <Tool name="对象捕捉" on><path d="M5 8v17h20V5H8" stroke="#fff" strokeWidth="1.500" /><path d="M1.500 1.500h7v7h-7z" stroke="#fff" strokeWidth="1.500" fill="#5b8ac2" /></Tool>
        <Drop name="对象捕捉" wide />
        <Tool name="线宽" sep><path d="M1 3h10v2H1zM1 9h10v3H1zM1 16h10v3H1zM1 22h10v4H1zM11 3h14v1H11zM11 9h14v2H11zM11 16h8v3h-8zM11 22h14v3H11z" fill="#ddd" /></Tool>
        <Tool name="透明度" on sep wide><path d="M1 1h24v24H1z" fill="#fff" /><path d="M5 2h4v4H5zM13 2h4v4h-4zM21 2h3v4h-3zM2 6h3v4H2zM9 6h4v4H9zM17 6h4v4h-4zM5 10h4v4H5zM13 10h4v4h-4zM21 10h3v4h-3zM2 14h3v4H2zM9 14h4v4H9zM17 14h4v4h-4zM5 18h4v4H5zM13 18h4v4h-4zM21 18h3v4h-3z" fill="#3f6a9c" /></Tool>
        <Tool name="选择循环" sep><path d="M5 1v9M1 5h9" stroke="#ddd" /><path d="M6 6h14v3" stroke="#888" /><path d="M8 9h17v16H8z" fill="#6ecb98" /></Tool>
        <Tool name="三维对象捕捉"><path d="M4.500 8.500h12V24h-12zM4.500 8.500l6-6h14l-8 6M24.500 2.500V17l-8 7" stroke="#ddd" strokeWidth="1.500" /><path d="M1.500 18.500h6v6h-6z" fill="#4b4b4b" stroke="#e09a6a" strokeWidth="1.500" /></Tool>
        <Drop name="三维对象捕捉" wide />
      </Group>
      <Group>
        <Tool name="动态 UCS" on><path d="M5 4v19h18" stroke="#fff" strokeWidth="1.500" /><path d="M5 0l4 6H1zM26 23l-6 4v-8z" fill="#fff" /><path d="M16 5l-5 8h4l-2 7 7-9h-4z" fill="#fff" /></Tool>
        <Tool name="选择过滤"><path d="M5 5h14v17H5zM5 5l4-3.500h15V18l-5 4" stroke="#ddd" strokeDasharray="4 1" /><path d="M2 3h6v6H2zM16 3h6v6h-6zM2 19h6v6H2zM16 19h6v6h-6z" fill="#6db6f5" /></Tool>
        <Drop name="选择过滤" />
        <Tool name="小控件" on><circle cx="13" cy="14" r="10" stroke="#fff" strokeWidth="1.500" /><path d="M13 4v8M9 16l-5 5M17 16l5 5M13 12l4 3v5l-4 3-4-3v-5z" stroke="#fff" strokeWidth="1.500" /><path d="M10 1h6v4h-6zM1 19h5v5H1zM20 19h5v5h-5z" fill="#5b8ac2" stroke="#fff" /></Tool>
        <Drop name="小控件" wide />
      </Group>
      <Group>
        <Tool name="注释可见性" on><Scale /><circle cx="21" cy="5" r="4" stroke="#dff" strokeWidth="1.500" fill="#5b8ac2" /></Tool>
        <Tool name="自动缩放"><Scale /><path d="M22 0l-6 7h4l-2 5 7-7h-4z" fill="#ddd" /></Tool>
        <Tool name="注释比例"><Scale /></Tool>
        <button type="button" className="flex w-[50px] items-center justify-center gap-2 text-base font-semibold">1:1<Caret w={10} /></button>
      </Group>
      <Group>
        <Tool name="切换工作空间"><circle cx="13" cy="13" r="6" stroke="#ddd" strokeWidth="5" /><path d="M13 1v5M13 20v5M1 13h5M20 13h5M5 5l3 3M18 18l3 3M21 5l-3 3M8 18l-3 3" stroke="#ddd" strokeWidth="4" /></Tool>
        <Drop name="工作空间" />
        <Tool name="注释监视器" wide><path d="M11 1h3v10h11v3H14v11h-3V14H1v-3h10z" fill="#e6e6e6" /></Tool>
      </Group>
      <Group>
        <Tool name="单位"><path d="M7 1h12v3h-5v2h5v3h-7v2h7v3h-5v2h5v3h-7v2h7v3H7z" fill="#ddd" /></Tool>
        <div className="relative border-r-2 border-[#747474]">
          <select aria-label="单位" className="h-full w-[110px] appearance-none pt-1 pl-2 text-lg leading-6 font-medium">
            <option>小数</option>
          </select>
          <Caret w={10} className="absolute top-[14px] right-[6px]" />
        </div>
        <Tool name="快捷特性"><path d="M4.500 2v22h17V2z" stroke="#ddd" strokeWidth="1.500" /><path d="M4 1h18v4H4zM8 9h2v2H8zM12 9h7v2h-7zM8 14h2v2H8zM12 14h7v2h-7zM8 19h2v2H8zM12 19h7v2h-7z" fill="#ddd" /></Tool>
      </Group>
      <Group>
        <Tool name="锁定用户界面" wide><path d="M12 20H2V2h20v8" stroke="#ddd" strokeWidth="1.500" /><path d="M1 1h22v4H1zM12 16h12v10H12z" fill="#ddd" /><path d="M20 16v-3a3 3 0 0 1 6 0v3" stroke="#ddd" strokeWidth="1.500" /><path d="M17 19h2v4h-2z" fill="#444" /></Tool>
        <Drop name="锁定" />
        <Tool name="隔离对象" wide><path d="M1.500 1.500h9v9h-9zM11 16l6 9H5z" stroke="#ddd" strokeWidth="1.500" /><circle cx="20" cy="13" r="5" stroke="#ddd" strokeWidth="1.500" /></Tool>
      </Group>
      <Group>
        <Tool name="图形性能" on wide><circle cx="13" cy="13" r="11.500" fill="#9fc2e8" stroke="#fff" strokeWidth="1.500" /><path d="M12 17 20 7" stroke="#fff" strokeWidth="3" /></Tool>
        <span className="w-[6px]" />
      </Group>
      <Group>
        <Tool name="全屏显示"><path d="M1 3h24v20H1z" stroke="#ddd" strokeWidth="1.500" /><path d="M16 11l5-4M10 15l-5 4" stroke="#ddd" strokeWidth="2" /><path d="M15 6h7v6zM11 20H4v-6z" fill="#ddd" /></Tool>
        <Tool name="自定义"><path d="M1 2h24v3H1zM1 12h24v3H1zM1 21h24v3H1z" fill="#e6e6e6" /></Tool>
      </Group>
    </div>
  </footer>
);

export default function App() {
  return (
    <div className="flex min-h-screen flex-col bg-white p-2 font-['Noto_Sans','Noto_Sans_CJK_SC',sans-serif]">
      <div className="flex flex-1 flex-col overflow-hidden bg-[#383838] shadow-[0_0_6px_2px_#8d8d92]">
        <Header />
        <RibbonTabs />
        <Ribbon />
        <main className="relative flex min-h-[680px] flex-1 flex-col">
          <DocTabs />
          <div className="relative flex-1 overflow-hidden bg-[#9d9d9d]">
            <Drawing />
            <ViewCube />
            <NavBar />
            <EdgeRecorder />
          </div>
          <ParameterHint />
          <AuthoringPalette />
          <PropertiesPalette />
        </main>
        <LayoutTabs />
        <StatusBar />
      </div>
    </div>
  );
}
